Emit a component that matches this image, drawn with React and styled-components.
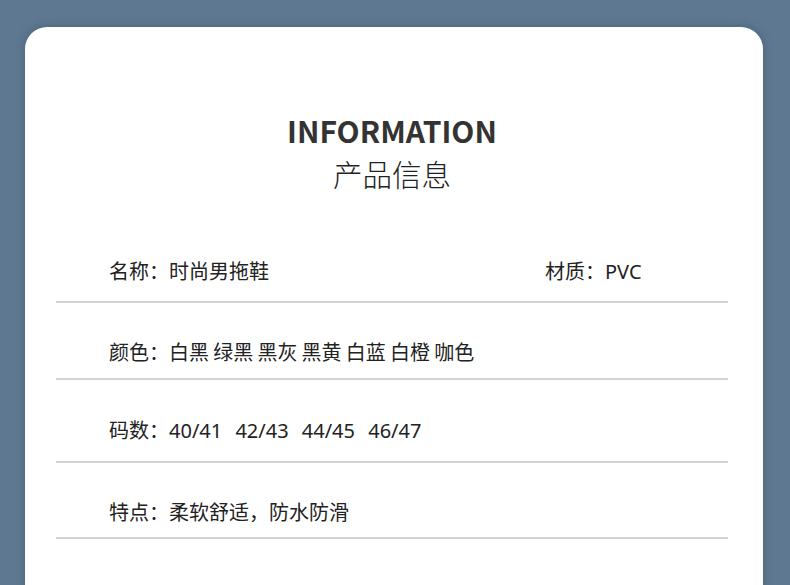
import styled, { createGlobalStyle } from "styled-components";

const Global = createGlobalStyle`
  html, body {
    margin: 0;
    padding: 0;
    background: #5e7891;
    overflow: hidden;
  }
  body {
    font-family: "Noto Sans", "Noto Sans CJK SC", sans-serif;
  }
`;

const Page = styled.div`
  width: 790px;
  height: 585px;
  overflow: hidden;
  padding: 27px 27px 0 25px;
  box-sizing: border-box;
`;

const Card = styled.div`
  background: #fff;
  border-radius: 22px 22px 0 0;
  height: 600px;
  padding: 84px 35px 0 31px;
  box-sizing: border-box;
  box-shadow: 0 0 10px rgba(40, 55, 75, 0.35);
`;

const Heading = styled.div`
  display: flex;
  flex-direction: column;
  align-items: center;
  color: #333;
`;

const En = styled.h1`
  margin: 0;
  font-family: "Noto Sans CJK SC", sans-serif;
  font-weight: 700;
  font-size: 30px;
  line-height: 38px;
  letter-spacing: 0;
`;

const Zh = styled.h2`
  margin: 4px 0 0;
  font-family: "Noto Sans CJK SC", sans-serif;
  font-weight: 300;
  font-size: 29.5px;
  line-height: 40px;
  color: #222;
`;

const List = styled.div`
  margin-top: 63px;
`;

const Row = styled.div`
  display: flex;
  justify-content: space-between;
  align-items: center;
  padding: ${(p) => p.$top}px 0 ${(p) => p.$bottom}px 53px;
  border-bottom: 2px solid #d2d2d2;
  height: 28px;
`;

const Field = styled.span`
  font-family: "Noto Sans", "Noto Sans CJK SC", sans-serif;
  font-size: 20px;
  color: #222;
  white-space: pre;
  word-spacing: ${(p) => p.$gap || 0}px;
  width: ${(p) => (p.$w ? `${p.$w}px` : "auto")};
`;

const rows = [
  { top: 0, bottom: 17, cells: [{ t: "名称：时尚男拖鞋" }, { t: "材质：PVC", w: 183 }] },
  { top: 34, bottom: 13, cells: [{ t: "颜色：白黑 绿黑 黑灰 黑黄 白蓝 白橙 咖色", gap: -1 }] },
  { top: 35, bottom: 18, cells: [{ t: "码数：40/41 42/43 44/45 46/47", gap: 8 }] },
  { top: 34, bottom: 12, cells: [{ t: "特点：柔软舒适，防水防滑" }] },
];

export default function App() {
  return (
    <Page>
      <Global />
      <Card>
        <Heading>
          <En>INFORMATION</En>
          <Zh>产品信息</Zh>
        </Heading>
        <List>
          {rows.map((r, i) => (
            <Row key={i} $top={r.top} $bottom={r.bottom}>
              {r.cells.map((c, j) => (
                <Field key={j} $w={c.w} $gap={c.gap}>{c.t}</Field>
              ))}
            </Row>
          ))}
        </List>
      </Card>
    </Page>
  );
}
